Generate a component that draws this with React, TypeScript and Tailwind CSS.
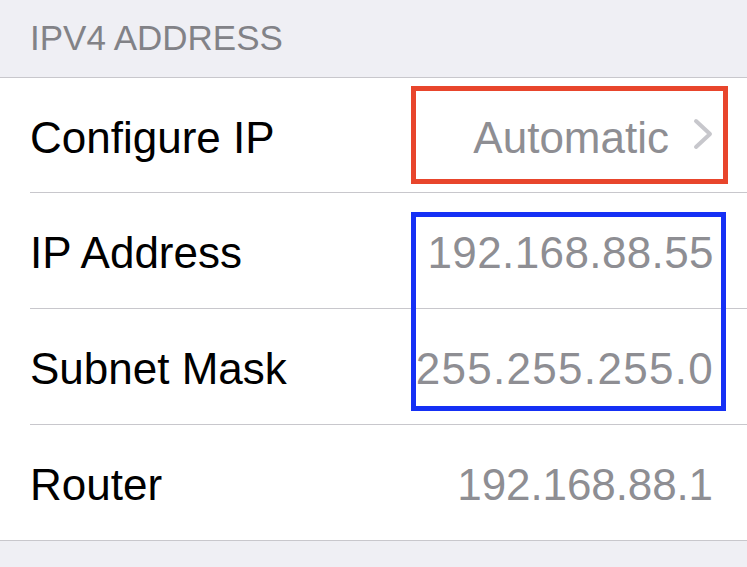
import React from 'react';

type Row = {
    label: string;
    value: string;
    tracking: string;
    height: string;
    chevron?: boolean;
};

const ROWS: Row[] = [
    { label: 'Configure IP', value: 'Automatic', tracking: 'tracking-[0px]', height: 'h-[115px]', chevron: true },
    { label: 'IP Address', value: '192.168.88.55', tracking: 'tracking-[0.4px] -mr-[1px]', height: 'h-[116px]' },
    { label: 'Subnet Mask', value: '255.255.255.0', tracking: 'tracking-[1.3px] -mr-[1px]', height: 'h-[116px]' },
    { label: 'Router', value: '192.168.88.1', tracking: 'tracking-[-0.1px]', height: 'h-[115px]' },
];

const Chevron: React.FC = () => (
    <svg width="20" height="32" viewBox="0 0 20 32" className="ml-[24px] -mt-[8px] shrink-0">
        <polyline points="3,3 17,16 3,29" fill="none" stroke="#c7c7cc" strokeWidth="4" strokeLinecap="round" strokeLinejoin="round" />
    </svg>
);

const App: React.FC = () => {
    return (
        <div className="relative w-[747px] h-[567px] overflow-hidden bg-[#efeff4] font-['Liberation_Sans',Arial,sans-serif]">
            {/* section header */}
            <div className="h-[77px] pt-[20px] pl-[30px] text-[35px] leading-none text-[#828287]">
                IPV4 ADDRESS
            </div>

            <div className="bg-white border-y border-[#c8c7cc]">
                {ROWS.map((row, i) => (
                    <div key={row.label} className="pl-[30px]">
                        <div
                            className={
                                row.height + ' flex items-center pr-[34px] pt-[5px] ' +
                                (i < ROWS.length - 1 ? 'border-b border-[#c8c7cc]' : '')
                            }
                        >
                            <span className="text-[44px] leading-none text-black">{row.label}</span>
                            <div className="ml-auto flex items-center">
                                <span className={'text-[44px] leading-none text-[#8e8e93] ' + row.tracking}>{row.value}</span>
                                {row.chevron && <Chevron />}
                            </div>
                        </div>
                    </div>
                ))}
            </div>

            {/* annotation boxes */}
            <div className="absolute left-[411px] top-[86px] w-[317px] h-[98px] border-[5px] border-[#e8452c]" />
            <div className="absolute left-[411px] top-[212px] w-[315px] h-[199px] border-[5px] border-[#1530f5]" />
        </div>
    );
};

export default App;
